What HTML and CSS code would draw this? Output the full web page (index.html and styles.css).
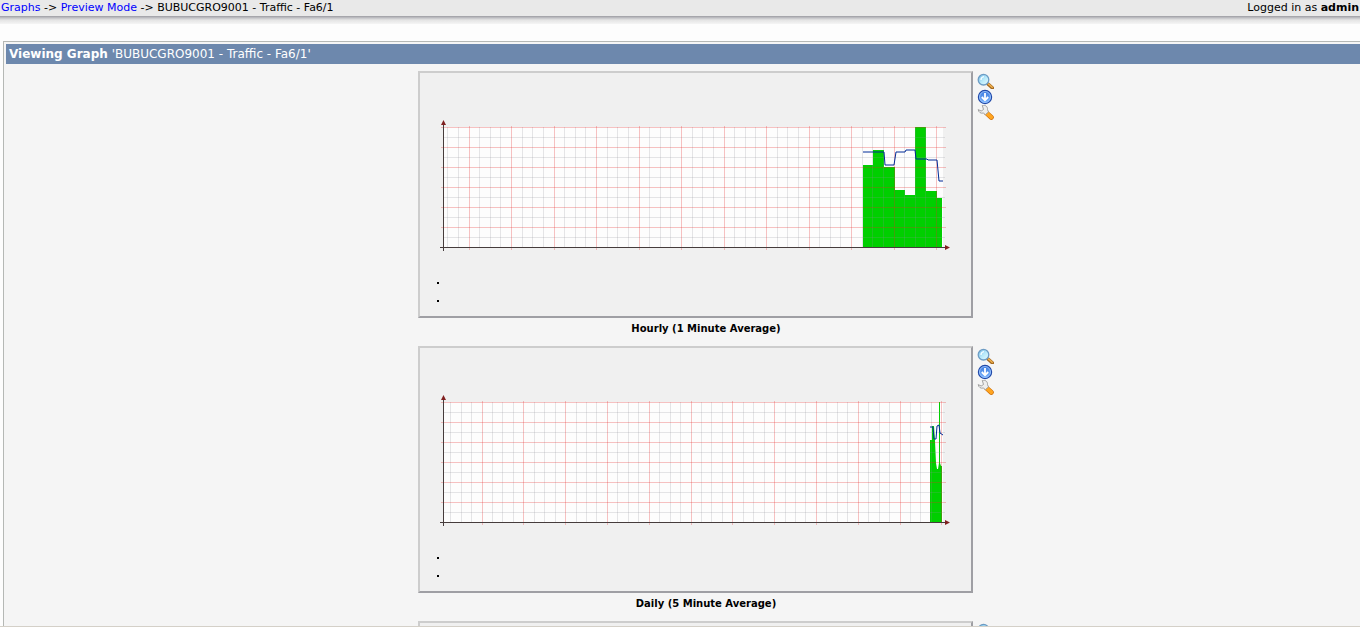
FILE: index.html
```html
<!DOCTYPE html>
<html lang="en">
<head>
<meta charset="utf-8">
<title>Graphs</title>
<link rel="stylesheet" href="styles.css">
</head>
<body>
<svg class="defs" aria-hidden="true">
  <defs>
    <linearGradient id="lens" x1="0" y1="0" x2="1" y2="1"><stop offset="0" stop-color="#6fb5e6"/><stop offset=".5" stop-color="#b8eafa"/><stop offset="1" stop-color="#e6fcff"/></linearGradient>
    <linearGradient id="disc" x1="0" y1="0" x2="0" y2="1"><stop offset="0" stop-color="#3c78dc"/><stop offset="1" stop-color="#78b4ff"/></linearGradient>
    <symbol id="zoom" viewBox="0 0 17 16">
      <path d="M11 11l4.500 4" stroke="#a56a20" stroke-width="3.400" stroke-linecap="round"/>
      <path d="M11.500 11l3.700 3.300" stroke="#f2b350" stroke-width="1.500" stroke-linecap="round"/>
      <circle cx="6.500" cy="6.700" r="5.300" fill="url(#lens)" stroke="#6d9cc4" stroke-width="1.300"/>
      <path d="M4 7q0-3 3-3.300" fill="none" stroke="#f4fdff" stroke-width="1.300"/>
    </symbol>
    <symbol id="down" viewBox="0 0 17 16">
      <circle cx="8" cy="8" r="6.600" fill="url(#disc)" stroke="#2149a8" stroke-width="1.200"/>
      <circle cx="8" cy="8" r="5.500" fill="none" stroke="#a5cbff" stroke-width=".8"/>
      <path d="M8 4v7M4.800 8L8 11.300 11.200 8" fill="none" stroke="#fff" stroke-width="1.800"/>
    </symbol>
    <symbol id="wrench" viewBox="0 0 17 16">
      <path d="M9.500 8l4.800 4.300" stroke="#c96a08" stroke-width="5" stroke-linecap="round"/>
      <path d="M9.500 8l4.800 4.200" stroke="#ffa520" stroke-width="3.800" stroke-linecap="round"/>
      <path d="M5.300.500c2.800-1 5.600 1.100 5.200 4.200l1 2.200-3.200 2.800-2-1.700C4 8.800 1.500 7.300 1.200 4.600l3 1.400 2.300-1.500z" fill="#eee" stroke="#999" stroke-width=".9"/>
    </symbol>
  </defs>
</svg>
<header class="topbar">
  <nav class="crumbs"><a href="#">Graphs</a> -&gt; <a href="#">Preview Mode</a> -&gt; BUBUCGRO9001 - Traffic - Fa6/1</nav>
  <div>Logged in as <b>admin</b></div>
</header>
<div class="shade"></div>
<main class="panel">
  <h1 class="title"><b>Viewing Graph</b> 'BUBUCGRO9001 - Traffic - Fa6/1'</h1>
  <div class="graphs">
    <section class="entry">
      <div class="row">
        <svg class="graph" viewBox="0 0 551 243" role="img" aria-label="Hourly traffic">
          <rect class="canvas" x="23" y="54" width="500" height="120"/>
          <path class="area" d="M443 174V92h10V77h11v17h11v23h10v5h10V54h11v64h11v7h5v49z"/>
          <g class="grid" data-start="49" data-step="42.5"></g>
          <path class="line" d="M443 79h21l1 13h9l2-13h9l1-2h9l1 9h11l1 1h9l2 21h4"/>
          <path class="axis" d="M20 174.500h506M23.500 178V52"/>
          <path class="arrow" d="M21 52l2.500-5 2.500 5zM525 172v5l5-2.500z"/>
          <path class="dots" d="M17 209h2v2h-2zM17 227h2v2h-2z"/>
        </svg>
        <div class="tools">
          <a href="#" aria-label="Zoom graph"><svg><use href="#zoom"/></svg></a>
          <a href="#" aria-label="CSV export"><svg><use href="#down"/></svg></a>
          <a href="#" aria-label="Properties"><svg><use href="#wrench"/></svg></a>
        </div>
      </div>
      <h2 class="caption">Hourly (1 Minute Average)</h2>
    </section>
    <section class="entry">
      <div class="row">
        <svg class="graph" viewBox="0 0 551 243" role="img" aria-label="Daily traffic">
          <rect class="canvas" x="23" y="54" width="500" height="120"/>
          <path class="area smooth" d="M510 174V92h2V78h2l1 15 1 22 1 6h1l1-6V54h1v61l1 3h1v56z"/>
          <g class="grid" data-start="62" data-step="41.8"></g>
          <path class="line" d="M510 79h3l1 12h2l1-13 2-1 1 8 3 2"/>
          <path class="axis" d="M20 174.500h506M23.500 178V52"/>
          <path class="arrow" d="M21 52l2.500-5 2.500 5zM525 172v5l5-2.500z"/>
          <path class="dots" d="M17 209h2v2h-2zM17 227h2v2h-2z"/>
        </svg>
        <div class="tools">
          <a href="#" aria-label="Zoom graph"><svg><use href="#zoom"/></svg></a>
          <a href="#" aria-label="CSV export"><svg><use href="#down"/></svg></a>
          <a href="#" aria-label="Properties"><svg><use href="#wrench"/></svg></a>
        </div>
      </div>
      <h2 class="caption">Daily (5 Minute Average)</h2>
    </section>
    <section class="entry">
      <div class="row">
        <svg class="graph" viewBox="0 0 551 243" aria-hidden="true"></svg>
        <div class="tools">
          <a href="#" aria-label="Zoom graph"><svg><use href="#zoom"/></svg></a>
        </div>
      </div>
    </section>
  </div>
</main>
<script src="grid.js"></script>
</body>
</html>
```

FILE: grid.js
```js
// Draws the major and minor rules of every chart.
document.querySelectorAll('.grid').forEach(function (g) {
  var start = Number(g.dataset.start);
  var step = Number(g.dataset.step);
  var minor = '';
  var major = '';
  for (var i = -4; i < 60; i++) {
    var x = Math.floor(start + i * step / 4);
    if (x <= 24 || x > 523) continue;
    if (i % 4 === 0) major += 'M' + (x + 0.5) + ' 53v124';
    else minor += 'M' + (x + 0.5) + ' 54v120';
  }
  for (var r = 0; r < 12; r++) {
    var y = 54.5 + r * 10;
    if (r % 2 === 0) major += 'M21 ' + y + 'h505';
    else minor += 'M23 ' + y + 'h502';
  }
  [['minor', minor], ['major', major]].forEach(function (item) {
    var p = document.createElementNS('http://www.w3.org/2000/svg', 'path');
    p.setAttribute('class', item[0]);
    p.setAttribute('d', item[1]);
    g.appendChild(p);
  });
});
```

FILE: styles.css
```css
* { box-sizing: border-box; }
html { height: 100%; }
body {
  margin: 0;
  height: 100%;
  overflow: hidden;
  display: flex;
  flex-direction: column;
  border-bottom: 1px solid #d4d0c8;
  background: #fdfdfd;
  color: #000;
  font-family: Verdana, "DejaVu Sans", sans-serif;
  font-size: 11px;
}
.defs { position: absolute; width: 0; height: 0; }
.topbar {
  flex: none;
  display: flex;
  justify-content: space-between;
  height: 16px;
  padding: 0 1px;
  line-height: 15px;
  background: #e9e9e9;
}
.crumbs a { color: #00f; text-decoration: none; }
.shade {
  flex: none;
  height: 8px;
  background: linear-gradient(#9c9ca2, #c4c4c8 25%, #e4e4e4 50%, #f5f5f5);
}
.panel {
  flex: 1;
  min-height: 0;
  overflow: hidden;
  margin: 17px 0 0 3px;
  padding: 2px 0 0 2px;
  border: solid #b5b8b5;
  border-width: 1px 0 0 1px;
  background: #f5f5f5;
}
.title {
  margin: 0;
  padding: 0 3px;
  background: #6d88ad;
  color: #fff;
  font-size: 12px;
  font-weight: normal;
  line-height: 20px;
}
.graphs {
  display: flex;
  flex-direction: column;
  align-items: center;
  padding: 7px 0 0 46px;
}
.entry { height: 275px; }
.row { display: flex; gap: 4px; }
.graph {
  width: 555px;
  height: 247px;
  border: 2px solid;
  border-color: #cdcdcd #9f9fa4 #9f9fa4 #cdcdcd;
  background: #f0f0f0;
}
.tools { padding-top: 2px; }
.tools a, .tools svg { display: block; width: 17px; height: 16px; }
.caption {
  margin: 0;
  font-size: 10px;
  line-height: 22px;
  text-align: center;
}
.canvas { fill: #fdfdfd; }
.area { fill: #00cf00; shape-rendering: crispEdges; }
.smooth { shape-rendering: auto; }
.minor, .major, .line, .axis { fill: none; stroke-width: 1px; }
.minor { stroke: #8c8c96; stroke-opacity: .22; }
.major { stroke: #e62828; stroke-opacity: .28; }
.line { stroke: #002a97; stroke-width: 1px; }
.axis { stroke: #463c3c; }
.arrow { fill: #802020; }
.dots { fill: #000; }
```
